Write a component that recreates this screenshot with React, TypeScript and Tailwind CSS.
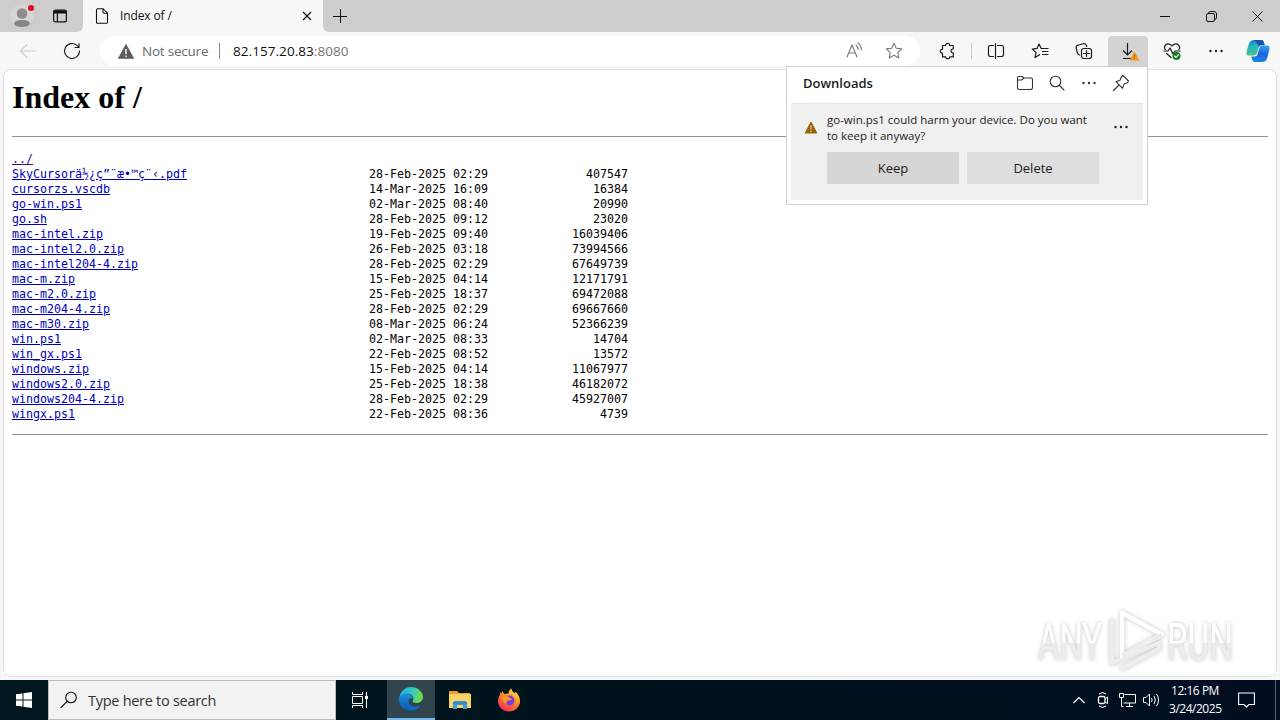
import type { ReactNode } from "react";

type IFile = { name: string; date: string; size: string };

const files: IFile[] = [
  { name: "SkyCursorä½¿ç”¨æ•™ç¨‹.pdf", date: "28-Feb-2025 02:29", size: "407547" },
  { name: "cursorzs.vscdb", date: "14-Mar-2025 16:09", size: "16384" },
  { name: "go-win.ps1", date: "02-Mar-2025 08:40", size: "20990" },
  { name: "go.sh", date: "28-Feb-2025 09:12", size: "23020" },
  { name: "mac-intel.zip", date: "19-Feb-2025 09:40", size: "16039406" },
  { name: "mac-intel2.0.zip", date: "26-Feb-2025 03:18", size: "73994566" },
  { name: "mac-intel204-4.zip", date: "28-Feb-2025 02:29", size: "67649739" },
  { name: "mac-m.zip", date: "15-Feb-2025 04:14", size: "12171791" },
  { name: "mac-m2.0.zip", date: "25-Feb-2025 18:37", size: "69472088" },
  { name: "mac-m204-4.zip", date: "28-Feb-2025 02:29", size: "69667660" },
  { name: "mac-m30.zip", date: "08-Mar-2025 06:24", size: "52366239" },
  { name: "win.ps1", date: "02-Mar-2025 08:33", size: "14704" },
  { name: "win_gx.ps1", date: "22-Feb-2025 08:52", size: "13572" },
  { name: "windows.zip", date: "15-Feb-2025 04:14", size: "11067977" },
  { name: "windows2.0.zip", date: "25-Feb-2025 18:38", size: "46182072" },
  { name: "windows204-4.zip", date: "28-Feb-2025 02:29", size: "45927007" },
  { name: "wingx.ps1", date: "22-Feb-2025 08:36", size: "4739" },
];

const Icon = ({ size = 18, className = "", children }: { size?: number; className?: string; children: ReactNode }) => (
  <svg
    width={size}
    height={size}
    viewBox="0 0 18 18"
    fill="none"
    stroke="currentColor"
    strokeWidth="1.1"
    strokeLinecap="round"
    strokeLinejoin="round"
    className={`shrink-0 ${className}`}
  >
    {children}
  </svg>
);

const Dots = () => (
  <Icon>
    <g fill="currentColor" stroke="none">
      <circle cx="3.5" cy="9" r="1.2" />
      <circle cx="9" cy="9" r="1.2" />
      <circle cx="14.5" cy="9" r="1.2" />
    </g>
  </Icon>
);

const ToolButton = ({ active, children }: { active?: boolean; children: ReactNode }) => (
  <div className={`flex h-[30px] w-10 shrink-0 items-center justify-center rounded-t ${active ? "bg-[#d3d3d3]" : ""}`}>
    {children}
  </div>
);

const WindowButton = ({ children }: { children: ReactNode }) => (
  <div className="flex h-8 w-[46px] items-center justify-center">{children}</div>
);

const TabStrip = () => (
  <div className="flex h-8 shrink-0 bg-[#f7f7f7]">
    <div className="flex w-[83px] items-center rounded-br-md bg-[#cdcdcd]">
      <svg width="24" height="24" viewBox="0 0 24 24" className="ml-[10px]">
        <circle cx="12" cy="12" r="11.5" fill="#d9d5d3" />
        <circle cx="12" cy="9.5" r="5.3" fill="#8c8c8c" />
        <path d="M4 20q0-4 8-4t8 4q-2 3-8 3t-8-3z" fill="#858585" />
        <circle cx="21" cy="4" r="3" fill="#e00b1c" />
      </svg>
      <svg width="16" height="16" viewBox="0 0 16 16" fill="none" stroke="#111" strokeWidth="1.2" className="ml-[18px]">
        <rect x="1.6" y="2.1" width="12.8" height="11.8" rx="2" />
        <path d="M1.6 4h12.8" strokeWidth="3" />
        <path d="M5.4 4v10" />
      </svg>
    </div>
    <div className="flex w-[240px] items-center">
      <svg width="14" height="16" viewBox="0 0 14 16" fill="none" stroke="#111" strokeWidth="1.1" className="ml-[12px]">
        <path d="M3 .7h5l4.5 4.5v9q0 1.1-1.2 1.1H2.7q-1.2 0-1.2-1.1V2Q1.500.7 3 .7z" />
        <path d="M8 .7v3.4q0 1.100 1.100 1.100h3.400" />
      </svg>
      <span className="ml-[11px] text-[12px] tracking-[-0.12px] text-[#111]">Index of /</span>
      <svg width="10" height="10" viewBox="0 0 10 10" stroke="#111" strokeWidth="1.2" className="mr-[11px] ml-auto">
        <path d="M1 1l8 8M9 1L1 9" />
      </svg>
    </div>
    <div className="flex flex-1 items-center rounded-bl-md bg-[#cdcdcd]">
      <svg width="14" height="14" viewBox="0 0 14 14" stroke="#111" className="ml-[10px]">
        <path d="M7.500 0v14M0 7.500h14" />
      </svg>
      <div className="ml-auto flex">
        <WindowButton>
          <svg width="10" height="10" stroke="#111"><path d="M0 5.500h10" /></svg>
        </WindowButton>
        <WindowButton>
          <svg width="11" height="11" viewBox="0 0 11 11" fill="none" stroke="#111">
            <rect x=".5" y="2.500" width="8" height="8" rx="1.500" />
            <path d="M2.500 2.200Q2.800.500 4.300.500h3.700q2.500 0 2.500 2.500v3.700q0 1.500-1.700 1.800" />
          </svg>
        </WindowButton>
        <WindowButton>
          <svg width="11" height="11" viewBox="0 0 11 11" stroke="#111"><path d="M.5.5l10 10M10.500.5l-10 10" /></svg>
        </WindowButton>
      </div>
    </div>
  </div>
);

const Toolbar = () => (
  <div className="flex h-[37px] shrink-0 items-center bg-[#f7f7f7] pt-px text-[#1b1b1b]">
    <Icon className="ml-[19px] text-[#cfcfcf]">
      <path d="M17 9H1.500M8 2.500L1.500 9 8 15.500" />
    </Icon>
    <Icon className="ml-[26px]">
      <path d="M16.500 9A7.500 7.500 0 1 1 14 3.400l1.800 1.800M16 1.500v4h-4" />
    </Icon>
    <div className="ml-[19px] flex h-[30px] w-[820px] items-center rounded-full bg-white text-[13.500px]">
      <svg width="16" height="15" viewBox="0 0 16 15" className="ml-[18px]">
        <path d="M8 .3L15.800 14.500H.2z" fill="#5c5c5c" stroke="#5c5c5c" strokeWidth=".6" strokeLinejoin="round" />
        <path d="M8 5v5M8 11.500v1.500" stroke="#fff" strokeWidth="1.400" />
      </svg>
      <span className="ml-2 w-[67px] tracking-[-0.22px] whitespace-nowrap text-[#6a6a6a]">Not secure</span>
      <div className="ml-[10px] h-4 w-px bg-[#8a8a8a]" />
      <span className="ml-[13px] tracking-[0.06px] whitespace-nowrap text-[#111]">
        82.157.20.83<span className="text-[#757575]">:8080</span>
      </span>
      <Icon className="mr-[22px] ml-auto text-[#777]">
        <path d="M2 15L7 3l5 12M3.700 11h6.600M11 3q2 1.500 2 4.500M13 1q3.500 2.500 3.300 7" />
      </Icon>
      <Icon className="mr-[17px] text-[#777]">
        <path d="M9 1.300l2.300 4.900 5.400.7-3.900 3.700 1 5.300L9 13.300l-4.800 2.600 1-5.300L1.300 6.900l5.400-.7z" />
      </Icon>
    </div>
    <div className="ml-2 flex items-center">
      <ToolButton>
        <Icon>
          <path d="M3.500 3.500h3.200c-.3-2.900 4.300-2.900 4 0h3.600v3.300c-3-.3-3 4.400 0 4.100v4h-3.600c.3 2.400-4.300 2.400-4 0H3.500v-3.700c-3 .3-3-4.200 0-3.900z" strokeWidth="1.200" />
        </Icon>
      </ToolButton>
      <div className="mr-1 ml-[3px] h-4 w-px bg-[#c9c9c9]" />
      <ToolButton>
        <Icon>
          <path d="M6.500 3.500H3.200Q1.500 3.500 1.500 5.200v7.600q0 1.700 1.700 1.700h3.300M10.500 3.500h4.300q1.700 0 1.700 1.700v7.600q0 1.700-1.700 1.700h-4.300M8.500 1.500v15" strokeWidth="1.200" />
        </Icon>
      </ToolButton>
    </div>
    <div className="ml-1 flex items-center gap-1">
      <ToolButton>
        <Icon>
          <path d="M8.500 12.700L4 15.500l1-5-3.700-3.400 4.900-.8L8 2l2.300 4.500h6.700M11.500 9.500H17M11.500 12.500H17" strokeWidth="1.200" />
        </Icon>
      </ToolButton>
      <ToolButton>
        <Icon>
          <rect x="6.500" y="6.500" width="10" height="10" rx="2.200" strokeWidth="1.200" />
          <path d="M11.500 8.500v6M8.500 11.500h6M4.500 13Q2.700 12.500 2.300 10.500L1.200 5.800Q.9 3.700 3 3.200L8 1.700q2.500-.4 3.300 1.500l.5 1.200" strokeWidth="1.200" />
        </Icon>
      </ToolButton>
      <ToolButton active>
        <svg width="24" height="22" viewBox="0 0 24 22" fill="none" stroke="#1b1b1b" strokeWidth="1.200" className="ml-1">
          <path d="M9.500 3v12M5 10.500l4.500 4.500L14 10.500M5 18.500h8" />
          <path d="M16.500 12.500L20.500 20h-8z" fill="#f39a1d" stroke="#f39a1d" strokeLinejoin="round" />
          <path d="M16.500 14.500v3M16.500 18.300v1" stroke="#b46406" />
        </svg>
      </ToolButton>
      <ToolButton>
        <Icon>
          <path d="M2.200 7.500Q.5 5 2.600 3C5 1 7.600 2.200 9 4c1.400-1.800 4-3 6.400-1Q17.500 5 16 7.500M3.500 11.500L8 15.500M1 9h4L7 6l3 6L12 9h5" strokeWidth="1.200" />
          <circle cx="13.500" cy="14" r="4" fill="#147a1e" stroke="none" />
          <path d="M11.500 14l1.500 1.500 2.500-2.900" stroke="#fff" />
        </Icon>
      </ToolButton>
      <ToolButton><Dots /></ToolButton>
    </div>
    <svg width="24" height="24" viewBox="0 0 24 24" className="ml-[10px] shrink-0">
      <defs>
        <linearGradient id="cpA" x1="0" y1="0" x2=".3" y2="1">
          <stop offset="0" stopColor="#1573d0" />
          <stop offset=".45" stopColor="#22b5c4" />
          <stop offset="1" stopColor="#4fc387" />
        </linearGradient>
        <linearGradient id="cpB" x1=".6" y1="0" x2=".4" y2="1">
          <stop offset="0" stopColor="#2fa3e8" />
          <stop offset=".5" stopColor="#1b63df" />
          <stop offset="1" stopColor="#1d84e6" />
        </linearGradient>
      </defs>
      <path d="M8 1h7.500q1.500 0 2.200 2l1 3h-3.200q-2 0-2.600 2l-2 6.500Q10.300 16.500 8 16.500H3Q-.4 16.500.7 12L3 4.500Q4.200 1 8 1z" fill="url(#cpA)" />
      <path d="M16 23H8.500Q7 23 6.400 21L5.300 17.500h3.500q2 0 2.600-2l2-6.500Q14 6.500 16 6.500h5q3.400 0 2.300 4.500L21 19.500Q19.800 23 16 23z" fill="url(#cpB)" />
      <path d="M8 1h7.500q1.500 0 2.200 2l1 3.300h-3.200q-1.500 0-2.200 1.200z" fill="#1754ad" />
    </svg>
  </div>
);

const FileRow = ({ name, date, size }: IFile) => (
  <li className="flex">
    <span className="w-[357px]">
      <a className="text-[#0000b8] underline">{name}</a>
    </span>
    <span className="w-[119px]">{date}</span>
    <span className="w-[140px] text-right">{size}</span>
  </li>
);

const Listing = () => (
  <div className="mx-[3px] h-[608px] shrink-0 rounded-lg border border-[#e2e2e2] bg-white px-2">
    <h1 className="pt-[9px] font-['Liberation_Serif'] text-[32px] leading-[37px] font-bold text-black">Index of /</h1>
    <hr className="mt-[20px] border-[#8f8f8f]" />
    <ul className="mt-[15px] h-[270px] font-['DejaVu_Sans_Mono',monospace] text-[11.630px] leading-[15px] whitespace-pre text-black">
      <li><a className="text-[#36127c] underline">../</a></li>
      {files.map((f) => (
        <FileRow key={f.name} {...f} />
      ))}
    </ul>
    <hr className="mt-[12px] border-[#8f8f8f]" />
  </div>
);

const Downloads = () => (
  <div className="absolute top-[66px] left-[786px] h-[139px] w-[362px] border border-[#cfcfcf] bg-white text-[#1b1b1b]">
    <div className="flex h-[36px] items-center pb-[3px] pl-4">
      <span className="text-[13px] font-semibold">Downloads</span>
      <div className="mr-[17px] ml-auto flex gap-[14px] pb-[2px] text-[#333]">
        <Icon>
          <path d="M1.500 4.200Q1.500 2.500 3.200 2.500h3L8 4h6.800q1.700 0 1.700 1.700v8.100q0 1.700-1.700 1.700H3.200q-1.700 0-1.700-1.700zM1.500 6h4L8 4" />
        </Icon>
        <Icon>
          <circle cx="7.500" cy="7.500" r="5.300" />
          <path d="M11.500 11.500L16 16" />
        </Icon>
        <Dots />
        <Icon>
          <path d="M11 1.500L16.500 7l-1 1.700-3.500 1.400-1.500 4.200L4 7.700l4-1.500L9.600 2.500zM7 11l-5.500 5.500" />
        </Icon>
      </div>
    </div>
    <div className="mx-1 h-[97px] border-t border-[#e5e5e5] bg-[#f0f0f0]">
      <div className="flex pt-[8px] pl-3">
        <svg width="16" height="15" viewBox="0 0 16 15" className="mt-2 shrink-0">
          <path d="M8 2l5.800 11H2.200z" fill="#9b6108" stroke="#9b6108" strokeLinejoin="round" />
          <path d="M8 5.500v4M8 10.500v1.500" stroke="#f0e4cf" />
        </svg>
        <p className="ml-[8px] w-[276px] text-[11.500px] leading-4 whitespace-nowrap">
          go-win.ps1 could harm your device. Do you want
          <br />
          to keep it anyway?
        </p>
        <div className="mt-[6px] ml-[9px]"><Dots /></div>
      </div>
      <div className="mt-2 ml-9 flex gap-2 text-[13px]">
        <button className="h-8 w-[132px] bg-[#d6d6d6] pt-px">Keep</button>
        <button className="h-8 w-[132px] bg-[#dedede] pt-px">Delete</button>
      </div>
    </div>
  </div>
);

const Watermark = () => (
  <svg width="246" height="76" viewBox="0 0 246 76" className="absolute top-[602px] left-[1030px] drop-shadow-[0_0_2px_rgba(0,0,0,0.24)]">
    <defs>
      <linearGradient id="wm" x1="0" y1="16" x2="0" y2="66" gradientUnits="userSpaceOnUse">
        <stop offset=".5" stopColor="#fff" />
        <stop offset=".5" stopColor="#ececec" />
      </linearGradient>
    </defs>
    <g fill="url(#wm)" fontFamily="Roboto" fontSize="52" fontWeight="400">
      <text x="8" y="58" textLength="64" lengthAdjust="spacingAndGlyphs">ANY</text>
      <text x="137" y="58" textLength="66" lengthAdjust="spacingAndGlyphs">RUN</text>
    </g>
    <g fill="none" strokeLinejoin="round" strokeWidth="4.500">
      <path d="M91 67l38-20V41L82 61V18" stroke="#ededed" />
      <path d="M92 54V11l40 21.500z" stroke="#fff" />
      <path d="M92 54l40-21.500" stroke="#ededed" />
    </g>
  </svg>
);

const Taskbar = () => (
  <div className="mt-auto flex h-10 shrink-0 items-center bg-linear-to-r from-[#00171f] via-[#00131d] to-[#030d22] text-white">
    <div className="flex w-12 justify-center">
      <svg width="16" height="16" viewBox="0 0 16 16" fill="#fff">
        <path d="M0 2.300l6.500-.9v6.100H0zM7.500 1.200L16 0v7.500H7.500zM0 8.500h6.500v6.100L0 13.700zM7.500 8.500H16V16l-8.500-1.200z" />
      </svg>
    </div>
    <div className="flex h-10 w-72 items-center border border-[#bcbcbc] bg-[#f2f2f2] text-[#333]">
      <Icon className="ml-[11px] text-[#111]">
        <circle cx="11" cy="6.500" r="5.300" />
        <path d="M7.300 10.300L1 16.500" />
      </Icon>
      <span className="ml-[10px] pt-px text-[14.500px] tracking-[-0.28px] whitespace-nowrap">Type here to search</span>
    </div>
    <div className="flex w-12 justify-center">
      <svg width="18" height="16" viewBox="0 0 18 16" fill="none" stroke="#fff">
        <path d="M1.500 0v2.500h10V0M1.500 16v-2.500h10V16M1.500 4.500h10v7h-10zM15.500 0v16" />
        <path d="M14 4h3v3h-3z" fill="#fff" stroke="none" />
      </svg>
    </div>
    <div className="ml-[3px] flex h-10 w-12 items-center justify-center border-b-2 border-[#76b9ed] bg-[#30454e]">
      <svg width="24" height="24" viewBox="0 0 24 24">
        <defs>
          <linearGradient id="edA" x1="0" y1="0" x2="1" y2=".3">
            <stop offset="0" stopColor="#27a9df" />
            <stop offset=".55" stopColor="#31c6ca" />
            <stop offset="1" stopColor="#6bdb50" />
          </linearGradient>
          <linearGradient id="edB" x1="0" y1="0" x2="0" y2="1">
            <stop offset="0" stopColor="#1b8ee0" />
            <stop offset="1" stopColor="#0b55ad" />
          </linearGradient>
        </defs>
        <path d="M.3 11C1 4.500 6 0 12 0c7 0 12 5 12 10 0 3.500-2.700 6-6.500 6-3 0-4.300-1.200-3.700-2.300 1.400-2 .6-5.700-3-6.700C7 6 2.500 7 .3 11z" fill="url(#edA)" />
        <path d="M0 13c0-4.500 4-6.700 8-6.200 4.500.5 6.500 3 6 5.200-1-1.500-4-1-4.500 2-.5 4 5 7.500 12 4.600C19.500 22 16 24 12 24 5 24 0 19 0 13z" fill="url(#edB)" />
        <path d="M9.500 13.500c-.8 5 5.500 8 12 5-2 3-5.500 5-8.500 5-5-.5-7.500-6.500-3.500-10z" fill="#1269bd" />
      </svg>
    </div>
    <div className="ml-px flex w-12 justify-center">
      <svg width="22" height="20" viewBox="0 0 22 20">
        <path d="M0 1h8l2 2h11v4H0z" fill="#e5a227" />
        <path d="M0 4h22v14H0z" fill="#f9d266" />
        <path d="M4 19v-6q0-2 2-2h10q2 0 2 2v6h-4v-4H8v4z" fill="#3d98dc" />
        <path d="M4 13h14" stroke="#2377bc" />
      </svg>
    </div>
    <div className="ml-px flex w-12 justify-center">
      <svg width="24" height="24" viewBox="0 0 24 24">
        <defs>
          <linearGradient id="ff" x1=".8" y1="0" x2=".2" y2="1">
            <stop offset="0" stopColor="#ffe64a" />
            <stop offset=".45" stopColor="#ff8a25" />
            <stop offset="1" stopColor="#f5225d" />
          </linearGradient>
        </defs>
        <path d="M5 3l2.500 3q2-.8 4-.5Q11.500 2 14.500.5q0 2.500 2.500 4.500l2-1q4 4.500 4 9c0 6-5 10.500-11 10.500S1 19 1 13q0-4 2-6.500L3.300 4l1.400 1.500z" fill="url(#ff)" />
        <circle cx="12.500" cy="12.500" r="5" fill="#7a3ddb" />
        <path d="M5 9q4-2 7.500.5L15 11q-1.500 2-4 1.500-2 .7-1 3Q6 16 5 9z" fill="#ff9524" />
      </svg>
    </div>
    <div className="ml-auto flex h-full items-center">
      <svg width="12" height="8" viewBox="0 0 12 8" fill="none" stroke="#fff" strokeWidth="1.200" className="mr-[11px]">
        <path d="M.5 7L6 1.500 11.500 7" />
      </svg>
      <svg width="14" height="18" viewBox="0 0 14 18" fill="none" stroke="#fff" className="mr-[9px]">
        <rect x="2.500" y="5.500" width="6.500" height="7" rx="1.500" strokeWidth="1.300" />
        <path d="M9 8l2.500-2v6.500L9 11M3 3q3.500-3 7 0M3 15q3.500 3 7 0" />
      </svg>
      <svg width="17" height="14" viewBox="0 0 17 14" fill="none" stroke="#fff" className="mr-[7px]">
        <path d="M5.500 1.500h11v8.500H4.500M10.500 10v3M7 13.500h7M.5.500h4v4h-4zM2.500 4.500v9h2" />
      </svg>
      <svg width="17" height="14" viewBox="0 0 17 14" fill="none" stroke="#fff" className="mr-[9px]">
        <path d="M.5 4.500H3L6.500 1v12L3 9.500H.5zM8.500 5q1.300 2 0 4M11 3q2.800 4 0 8M13.500 1q4.200 6 0 12" />
      </svg>
      <div className="w-[52px] text-center text-[12px] leading-[18px] tracking-[-0.48px] whitespace-nowrap">
        <p>12:16 PM</p>
        <p>3/24/2025</p>
      </div>
      <svg width="17" height="16" viewBox="0 0 17 16" fill="none" stroke="#fff" strokeWidth="1.100" className="mr-[20px] ml-[17px]">
        <path d="M.6 1h15.800v11.500h-5.400L8.500 15 6 12.500H.6z" />
      </svg>
      <div className="mr-1 h-full w-px bg-[#5b626f]" />
    </div>
  </div>
);

const App = () => {
  return (
    <div className="relative flex h-[720px] w-[1280px] flex-col overflow-hidden bg-[#f7f7f7] font-['Open_Sans',sans-serif]">
      <TabStrip />
      <Toolbar />
      <Listing />
      <Downloads />
      <Watermark />
      <Taskbar />
    </div>
  );
};

export default App;
